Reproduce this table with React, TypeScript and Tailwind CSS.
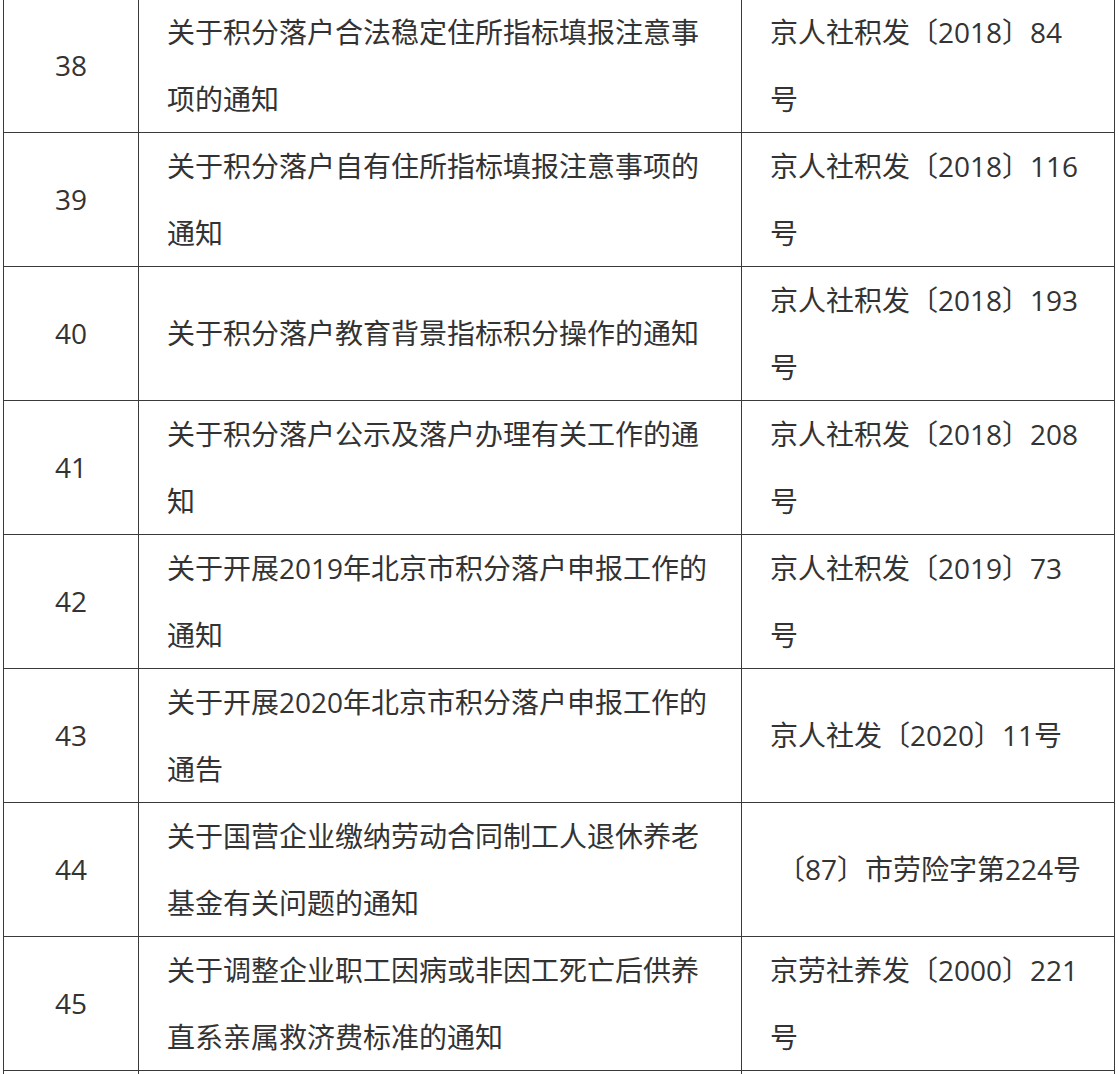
import React from 'react'

type Row = {
  no: string,
  title: string,
  doc: string,
  center?: boolean,
}

const rows: Row[] = [
  { no: '38', title: '关于积分落户合法稳定住所指标填报注意事项的通知', doc: '京人社积发〔2018〕84号' },
  { no: '39', title: '关于积分落户自有住所指标填报注意事项的通知', doc: '京人社积发〔2018〕116号' },
  { no: '40', title: '关于积分落户教育背景指标积分操作的通知', doc: '京人社积发〔2018〕193号' },
  { no: '41', title: '关于积分落户公示及落户办理有关工作的通知', doc: '京人社积发〔2018〕208号' },
  { no: '42', title: '关于开展2019年北京市积分落户申报工作的通知', doc: '京人社积发〔2019〕73号' },
  { no: '43', title: '关于开展2020年北京市积分落户申报工作的通告', doc: '京人社发〔2020〕11号' },
  { no: '44', title: '关于国营企业缴纳劳动合同制工人退休养老基金有关问题的通知', doc: '〔87〕市劳险字第224号', center: true },
  { no: '45', title: '关于调整企业职工因病或非因工死亡后供养直系亲属救济费标准的通知', doc: '京劳社养发〔2000〕221号' },
  { no: '', title: '', doc: '' },
]

function TableRow(props: { row: Row }) {
  const r = props.row
  return (
    <div className="grid grid-cols-[135px_603px_374px] h-[134px] border-b border-[#3a3a3a]">
      <div className="border-r border-[#3a3a3a] flex items-center justify-center">
        {r.no}
      </div>
      <div className="border-r border-[#3a3a3a] flex items-center px-[28px]">
        <p className="break-all">{r.title}</p>
      </div>
      <div className="flex items-center px-[28px]">
        <p className={r.center ? 'w-full text-center break-all' : 'break-all'}>{r.doc}</p>
      </div>
    </div>
  )
}

export default function App() {
  return (
    <div className="w-[1118px] h-[1074px] overflow-hidden bg-white">
      <div
        className="ml-[3px] -mt-[2px] w-[1112px] border-l border-t border-r border-[#3a3a3a] text-[28px] leading-[66.5px] text-[#333333]"
        style={{ fontFamily: '"Open Sans", "Noto Sans CJK SC", sans-serif' }}
      >
        {rows.map((r, i) => <TableRow key={i} row={r} />)}
      </div>
    </div>
  )
}
